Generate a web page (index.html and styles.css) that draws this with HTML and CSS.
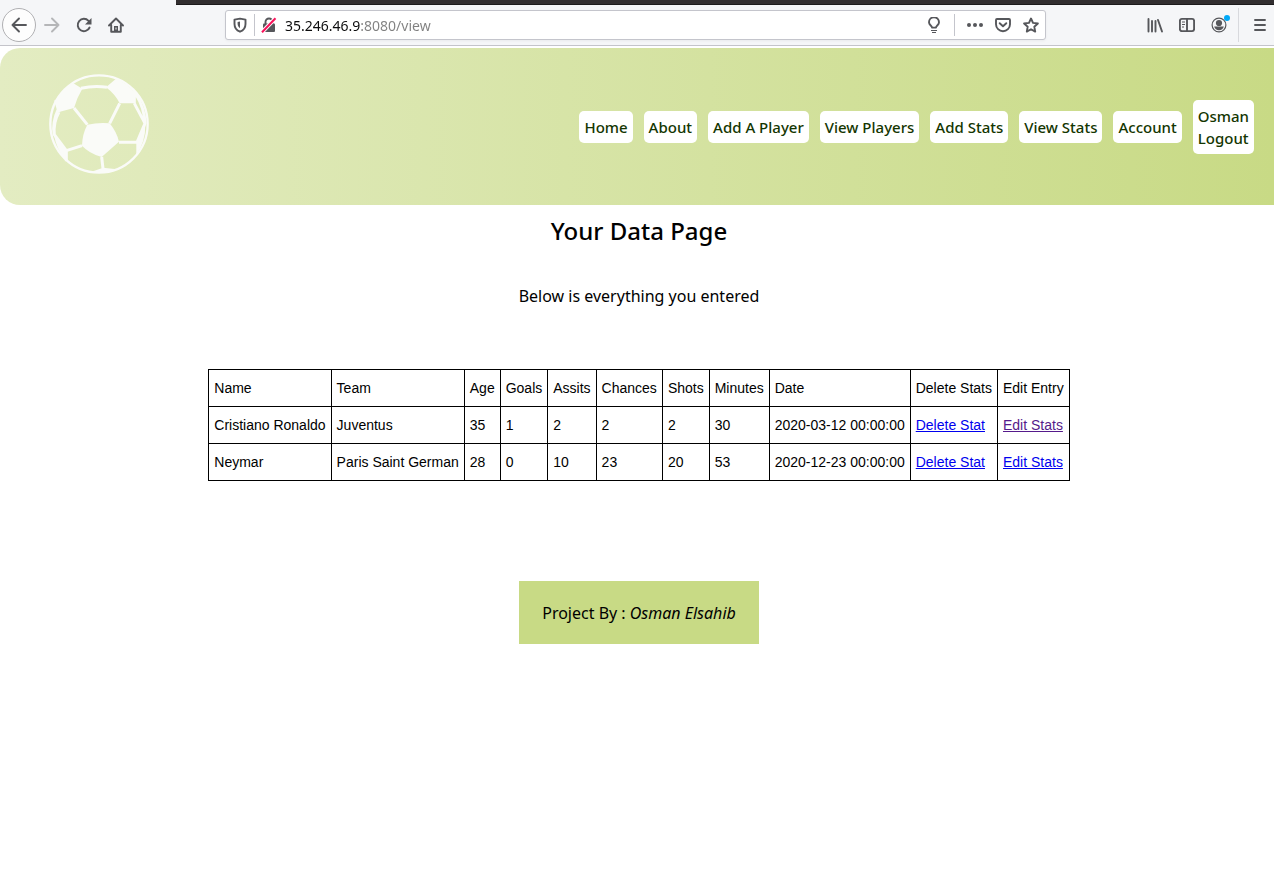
FILE: index.html
```html
<!DOCTYPE html>
<html lang="en">
<head>
<meta charset="utf-8">
<title>Your Data Page</title>
<link rel="stylesheet" href="styles.css">
</head>
<body>
<div class="browser">
  <div class="tabstrip"><span class="tab-active"></span><span class="tabs-rest"></span></div>
  <div class="toolbar">
    <div class="tool-group">
      <button class="tool back" aria-label="Back"><svg class="icon" viewBox="0 0 16 16"><path d="M15 8H1.500M8 1.500 1.500 8 8 14.500" class="line"/></svg></button>
      <button class="tool faded" aria-label="Forward"><svg class="icon" viewBox="0 0 16 16"><path d="M1 8h13.500M8 1.500 14.500 8 8 14.500" class="line"/></svg></button>
      <button class="tool" aria-label="Reload"><svg class="icon" viewBox="0 0 16 16"><path d="M13.600 10.500A6.200 6.200 0 1 1 12.500 3.800l1.300 1.400" class="line"/><path d="M15.500 1v6.500H9z"/></svg></button>
      <button class="tool" aria-label="Home"><svg class="icon" viewBox="0 0 16 16"><path d="M1 8.500 8 1.500l7 7M3.200 8v6.800h9.600V8" class="line"/><path d="M6 9h4v6H6z"/><path d="M8 10.500v2" stroke="#f5f6f8" stroke-width="1"/></svg></button>
    </div>
    <div class="urlbar">
      <svg class="icon" viewBox="0 0 16 16"><path d="M8 1.600 13.500 2.600v4.300c0 3.600-2 6.300-5.500 7.800-3.500-1.500-5.500-4.200-5.500-7.800V2.600z" class="line"/><path d="M8 4.600v6.600C6.400 10.200 5.600 8.600 5.600 6.500V5z"/></svg>
      <span class="bar"></span>
      <svg class="icon" viewBox="0 0 16 16"><path d="M4.500 7V5a3.500 3.500 0 0 1 7 0v2" class="line"/><rect x="2" y="6.500" width="12" height="8.500" rx="1"/><path d="M1 15.200 14.500 1.200" stroke="#fff" stroke-width="4"/><path d="M1 15.200 14.500 1.200" stroke="#f8125a" stroke-width="2"/></svg>
      <input class="address" type="text" value="35.246.46.9:8080/view" aria-label="Address">
      <div class="page-actions">
        <svg class="icon" viewBox="0 0 16 16"><path d="M6 10.600C6 8.700 3 8 3 5.200a5 5 0 0 1 10 0C13 8 10 8.700 10 10.600z" class="line"/><path d="M5 13h6v1H5zM6 15h4v1H6z"/></svg>
        <span class="bar"></span>
        <svg class="icon" viewBox="0 0 16 16"><circle cx="2" cy="8" r="2"/><circle cx="8" cy="8" r="2"/><circle cx="14" cy="8" r="2"/></svg>
        <svg class="icon" viewBox="0 0 16 16"><path d="M2 2h12a1 1 0 0 1 1 1v4.200a7 7 0 0 1-14 0V3a1 1 0 0 1 1-1zM4.700 6.200 8 9.300l3.300-3.100" class="line"/></svg>
        <svg class="icon" viewBox="0 0 16 16"><path d="m8 1.500 2 4.400 4.900.6-3.600 3.200.9 4.900L8 12.200l-4.200 2.400.9-4.900-3.600-3.200 4.900-.6z" class="line"/></svg>
      </div>
    </div>
    <div class="tool-group">
      <button class="tool" aria-label="Library"><svg class="icon" viewBox="0 0 16 16"><path d="M1.500 2v12.500M5 4v10.500M8.500 4v10.500M11 3l4 11.500" class="line"/></svg></button>
      <button class="tool" aria-label="Sidebars"><svg class="icon" viewBox="0 0 16 16"><rect x=".9" y="1.900" width="14.200" height="12.200" rx="2" class="line"/><path d="M8 2v12" class="line"/><path d="M3 5h3M3 7.500h3M3 10h2" stroke="#56575b" stroke-width="1"/></svg></button>
      <button class="tool account" aria-label="Firefox account"><svg class="icon" viewBox="0 0 16 16"><circle cx="8" cy="8" r="6.900" fill="none" stroke="#56575b" stroke-width="1.200"/><circle cx="8" cy="6" r="3.100"/><path d="M3.200 9.600h9.600C12.300 12 10.400 13.200 8 13.200S3.700 12 3.200 9.600z"/></svg><span class="dot"></span></button>
      <span class="divider"></span>
      <button class="tool menu" aria-label="Menu"><svg class="icon" viewBox="0 0 16 16"><path d="M3 3h10M3 8h10M3 13h10" class="line"/></svg></button>
    </div>
  </div>
</div>
<header class="site-header">
  <svg class="logo" viewBox="0 0 300 300" role="img" aria-label="Football">
    <g class="seams">
      <circle cx="150" cy="150" r="146" stroke-width="7"/>
      <path d="M96 43Q135 34 174 40M75 102 115 152M212 88 182 148M256 88 288 148 264 205H210M256 88V52M288 150Q288 105 259 57M30 114Q12 146 16 182L52 230 99 215M30 114 20 78M16 182Q8 148 30 100M52 230V262M158 249 162 284"/>
    </g>
    <g class="patches">
      <path d="M115 152Q148 145 182 148 202 172 210 203L158 249Q120 238 99 215 100 180 115 152z"/>
      <path d="m72 27 28 17Q84 70 75 102L30 114 21 82Q43 45 72 27z"/>
      <path d="m201 14-30 26Q198 60 212 88H256L260 58Q234 27 201 14z"/>
      <path d="M14 180 52 230V260Q24 232 14 180z"/>
      <path d="M289 150 262 205V242Q290 204 289 150z"/>
      <path d="m126 294 36-13 42 5Q166 302 126 294z"/>
    </g>
  </svg>
  <nav class="nav">
    <a href="#">Home</a>
    <a href="#">About</a>
    <a href="#">Add A Player</a>
    <a href="#">View Players</a>
    <a href="#">Add Stats</a>
    <a href="#">View Stats</a>
    <a href="#">Account</a>
    <a href="#">Osman<br>Logout</a>
  </nav>
</header>
<main class="content">
  <h1>Your Data Page</h1>
  <p>Below is everything you entered</p>
  <table class="stats">
    <thead><tr><th>Name</th><th>Team</th><th>Age</th><th>Goals</th><th>Assits</th><th>Chances</th><th>Shots</th><th>Minutes</th><th>Date</th><th>Delete Stats</th><th>Edit Entry</th></tr></thead>
    <tbody>
      <tr><td>Cristiano Ronaldo</td><td>Juventus</td><td>35</td><td>1</td><td>2</td><td>2</td><td>2</td><td>30</td><td>2020-03-12 00:00:00</td><td><a href="#">Delete Stat</a></td><td><a class="seen" href="#">Edit Stats</a></td></tr>
      <tr><td>Neymar</td><td>Paris Saint German</td><td>28</td><td>0</td><td>10</td><td>23</td><td>20</td><td>53</td><td>2020-12-23 00:00:00</td><td><a href="#">Delete Stat</a></td><td><a href="#">Edit Stats</a></td></tr>
    </tbody>
  </table>
  <footer class="credit">Project By : <em>Osman Elsahib</em></footer>
</main>
</body>
</html>
```
FILE: styles.css
```css
* { box-sizing: border-box; }
body {
  margin: 0;
  background: #fff;
  color: #000;
  font: 16px/22px "Noto Sans", sans-serif;
}

/* Browser chrome */
.browser { background: #f5f6f8; border-bottom: 1px solid #c4c4ca; }
.tabstrip { display: flex; height: 5px; }
.tab-active { width: 176px; }
.tabs-rest { flex: 1; background: #322e30; border-bottom: 1px solid #1c1a1b; }
.toolbar { display: flex; align-items: center; height: 40px; padding-left: 2px; }
.tool-group { display: flex; align-items: center; }
.tool {
  display: flex;
  align-items: center;
  justify-content: center;
  width: 32px;
  height: 34px;
  padding: 0;
  border: 0;
  background: none;
}
.back { width: 34px; border: 1px solid #b0b0b3; border-radius: 50%; background: #fdfdfd; }
.faded { opacity: .4; }
.icon { width: 16px; height: 16px; flex: none; fill: #56575b; }
.line { fill: none; stroke: #56575b; stroke-width: 1.9; stroke-linejoin: round; stroke-linecap: round; }
.urlbar {
  display: flex;
  align-items: center;
  gap: 6px;
  flex: 1;
  height: 30px;
  margin: 0 93px;
  padding: 0 6px;
  border: 1px solid #c4c5cc;
  border-radius: 3px;
  background: #fff;
  box-shadow: 0 1px 3px #0000000d;
}
.bar { width: 1px; height: 22px; background: #c4c5cc; }
.address {
  flex: 1;
  min-width: 0;
  margin: 0 2px;
  padding: 2px 0 0;
  border: 0;
  outline: 0;
  font: 14px/20px "Noto Sans", sans-serif;
  color: transparent;
  background: linear-gradient(90deg, #0c0c0d 75px, #808080 75px) text;
}
.page-actions { display: flex; align-items: center; gap: 12px; }
.account { position: relative; }
.dot { position: absolute; top: 7px; right: 5px; width: 6px; height: 6px; border-radius: 50%; background: #00a9f8; }
.divider { width: 1px; height: 34px; margin: 0 7px 0 3px; background: #d8d9dd; }
.menu { width: 28px; }

/* Site header */
.site-header {
  display: flex;
  align-items: center;
  justify-content: space-between;
  margin-top: 2px;
  padding: 26px 20px 31px 49px;
  border-radius: 20px 0 0 20px;
  background: linear-gradient(90deg, #e3ecc2, #c8da85);
}
.logo { width: 100px; height: 100px; fill: #fafbf8; }
.seams { fill: none; stroke: #fafbf8; stroke-width: 9; stroke-linejoin: round; }
.nav { display: flex; align-items: center; gap: 11px; padding-top: 5px; }
.nav a {
  padding: 5px;
  border-radius: 5px;
  background: #fff;
  color: #143601;
  font-size: 15px;
  font-weight: 500;
  text-decoration: none;
  white-space: nowrap;
}

/* Page content */
.content { display: flex; flex-direction: column; align-items: center; padding: 10px 0 0 4px; }
.content h1 { margin: 0; font-size: 24px; line-height: 32px; font-weight: 500; }
.content p { margin: 38px 0 62px; }
.stats { border-collapse: collapse; font: 14px/16px "Liberation Sans", Arial, sans-serif; }
.stats th, .stats td { padding: 10px 5px; border: 1px solid #000; text-align: left; font-weight: 400; white-space: nowrap; }
.stats a { color: #00e; }
.stats .seen { color: #551a8b; }
.credit { margin-top: 100px; padding: 21px 23px 20px; background: #c8da85; }
```
